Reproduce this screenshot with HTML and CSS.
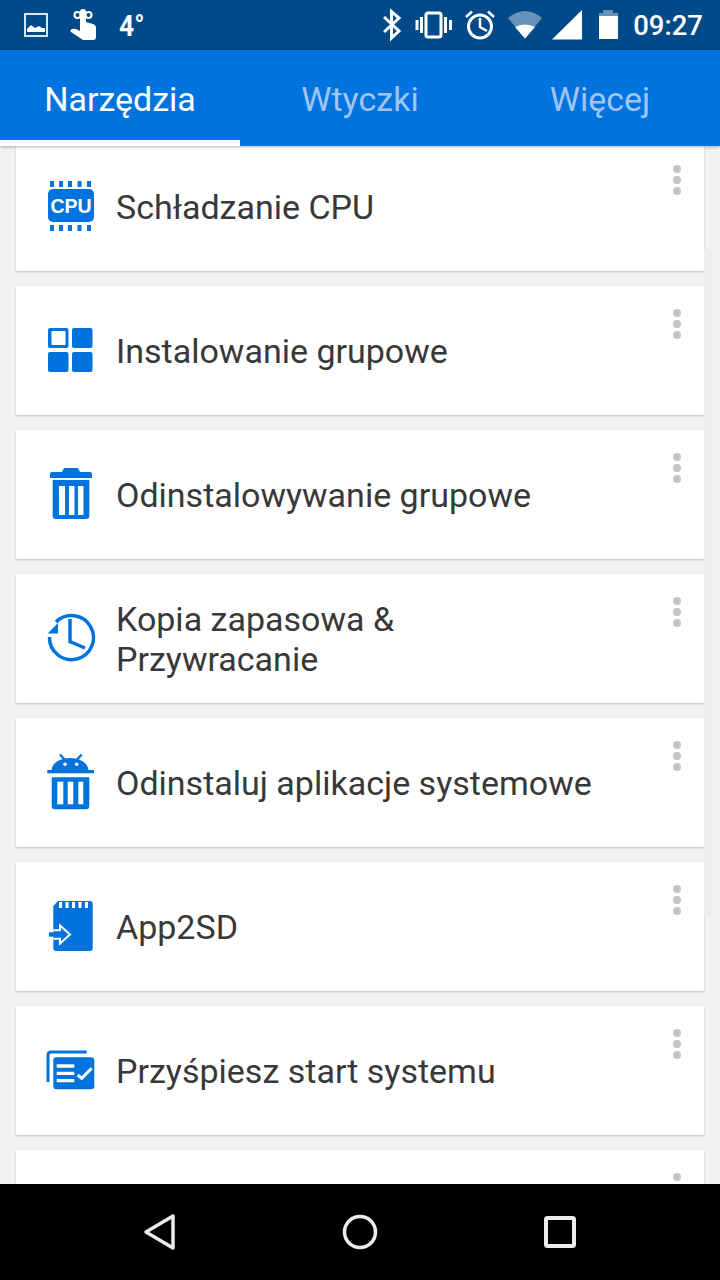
FILE: index.html
```html
<!DOCTYPE html>
<html>
    <head>
        <meta charset="utf-8">
        <title>Narzędzia</title>

        <link rel="stylesheet" href="styles.css">
    </head>

    <body>
        <div class="app">
            <div class="status-bar">
                <svg class="picture-icon" width="24" height="24" viewBox="0 0 24 24">
                    <rect x="1" y="1" width="22" height="22" fill="none" stroke="#d5e6f7" stroke-width="2"/>
                    <path d="M3 19 V16 L7 12 L11 15 L15 13 L18 15 L21 15 V19 Z" fill="#fff"/>
                </svg>
                <svg class="hand-icon" width="28" height="32" viewBox="0 0 28 32">
                    <circle cx="7.500" cy="6" r="3" fill="none" stroke="#fff" stroke-width="2"/>
                    <circle cx="18.500" cy="6" r="3" fill="none" stroke="#fff" stroke-width="2"/>
                    <path d="M10 3 a3 3 0 0 1 6 0 V13 L23 15 Q26 16 26 19 V28 Q26 31 23 31 H13 L1 23 Q-0.500 21 2 20 Q5 19 10 22 Z" fill="#fff"/>
                </svg>
                <span class="temperature">4°</span>
                <svg class="status-icons" width="235" height="50" viewBox="384 0 235 50">
                    <path d="M385 17 L400 31 L392.5 38 V11.5 L400 18 L385 32" fill="none" stroke="#fff" stroke-width="3"/>
                    <rect x="427" y="13" width="15" height="24" rx="2" fill="none" stroke="#fff" stroke-width="3"/>
                    <path d="M418 20 V30 M422.500 17 V33 M446.500 17 V33 M451.500 20 V30" stroke="#fff" stroke-width="3"/>
                    <circle cx="481" cy="26.500" r="11.500" fill="none" stroke="#fff" stroke-width="3"/>
                    <path d="M481 18 V27 L488 31 M467 17 L473 11.500 M489 11.500 L495 17" fill="none" stroke="#fff" stroke-width="2.500"/>
                    <path d="M509 18 Q526 4 543 18 L526 38.500 Z" fill="#fff" opacity="0.4"/>
                    <path d="M516 27 Q526 22 536 27 L526 38.500 Z" fill="#fff"/>
                    <path d="M553 39.500 H583 V10 Z" fill="#fff"/>
                    <path d="M604 13 V10 H614 V13 H619 V16 H600 V13 Z" fill="#fff" opacity="0.4"/>
                    <rect x="600" y="16" width="19" height="23" fill="#fff"/>
                </svg>
                <span class="clock">09:27</span>
            </div>

            <div class="tabs">
                <div class="tab tab-active">Narzędzia</div>
                <div class="tab">Wtyczki</div>
                <div class="tab">Więcej</div>
            </div>

            <div class="list">
                <div class="card">
                    <svg class="card-icon" viewBox="0 0 50 50">
                        <rect x="2" y="8" width="46" height="33" rx="5"/>
                        <path d="M4 0 h4 v6 h-4 z M13 0 h4 v6 h-4 z M22 0 h4 v6 h-4 z M31.500 0 h4 v6 h-4 z M41 0 h4 v6 h-4 z M4 44 h4 v6 h-4 z M13 44 h4 v6 h-4 z M22 44 h4 v6 h-4 z M31.500 44 h4 v6 h-4 z M41 44 h4 v6 h-4 z"/>
                        <text class="cpu-label" x="25" y="31.500">CPU</text>
                    </svg>
                    <div class="card-title">Schładzanie CPU</div>
                    <div class="dots"><i></i><i></i><i></i></div>
                </div>

                <div class="card">
                    <svg class="card-icon" viewBox="0 0 50 50">
                        <rect x="2" y="3" width="20.500" height="20" rx="2"/>
                        <rect x="26" y="3" width="20.500" height="20" rx="2"/>
                        <rect x="2" y="27" width="20.500" height="20" rx="2"/>
                        <rect x="26" y="27" width="20.500" height="20" rx="2"/>
                        <rect class="white" x="5.500" y="6" width="14" height="14" rx="1"/>
                    </svg>
                    <div class="card-title">Instalowanie grupowe</div>
                    <div class="dots"><i></i><i></i><i></i></div>
                </div>

                <div class="card">
                    <svg class="card-icon" viewBox="0 0 50 50">
                        <path d="M4 9 V5 Q4 3 6 3 H16 L18 -1 H32 L34 3 H44 Q46 3 46 5 V9 Z"/>
                        <path d="M6.700 11 H43.300 V47 Q43.300 50 40 50 H10 Q6.700 50 6.700 47 Z"/>
                        <rect class="white" x="13" y="17" width="6" height="29"/>
                        <rect class="white" x="23" y="17" width="5.500" height="29"/>
                        <rect class="white" x="32" y="17" width="5.500" height="29"/>
                    </svg>
                    <div class="card-title">Odinstalowywanie grupowe</div>
                    <div class="dots"><i></i><i></i><i></i></div>
                </div>

                <div class="card">
                    <svg class="card-icon" viewBox="0 0 50 50">
                        <path class="line" d="M3.500 24 A22 22 0 1 0 10 9" stroke-width="3.500"/>
                        <path class="line" d="M24 6 V28.700 L39 35" stroke-width="3.500"/>
                        <path d="M12 10 V20.500 H1.700 Z"/>
                    </svg>
                    <div class="card-title">Kopia zapasowa &amp;<br>Przywracanie</div>
                    <div class="dots"><i></i><i></i><i></i></div>
                </div>

                <div class="card">
                    <svg class="card-icon" viewBox="0 0 50 50">
                        <path d="M5.700 13 A18.300 12 0 0 1 42.300 13 Z"/>
                        <rect x="1.300" y="13" width="46.700" height="3.300"/>
                        <path class="line" d="M14 -2.500 L19 3 M35.700 -2.500 L30.700 3" stroke-width="2.500"/>
                        <circle class="white" cx="19" cy="7.300" r="1.800"/>
                        <circle class="white" cx="30.700" cy="7.300" r="1.800"/>
                        <path d="M5.700 20.300 H43.300 V49 Q43.300 52.300 40 52.300 H9 Q5.700 52.300 5.700 49 Z"/>
                        <rect class="white" x="11.300" y="24.700" width="6" height="22.600"/>
                        <rect class="white" x="21.700" y="24.700" width="5.600" height="22.600"/>
                        <rect class="white" x="32.300" y="24.700" width="5" height="22.600"/>
                    </svg>
                    <div class="card-title">Odinstaluj aplikacje systemowe</div>
                    <div class="dots"><i></i><i></i><i></i></div>
                </div>

                <div class="card">
                    <svg class="card-icon" viewBox="0 0 50 50">
                        <path d="M12 0 H44 Q46.700 0 46.700 3 V47 Q46.700 50 44 50 H10 Q7.300 50 7.300 47 V5 Z"/>
                        <path class="white" d="M13 1 h3 v6 h-3 z M19.500 1 h3 v6 h-3 z M26 1 h3 v6 h-3 z M32.500 1 h3 v6 h-3 z M39 1 h3 v6 h-3 z"/>
                        <rect class="white" x="0" y="28" width="7.300" height="11"/>
                        <path d="M3 31.300 H15 V35.700 H3 Z"/>
                        <path d="M7.300 29.300 H14 V24.500 L24 33.500 L14 42.500 V37.700 H7.300" fill="none" stroke="#fff" stroke-width="2"/>
                    </svg>
                    <div class="card-title">App2SD</div>
                    <div class="dots"><i></i><i></i><i></i></div>
                </div>

                <div class="card">
                    <svg class="card-icon" viewBox="0 0 50 50">
                        <path class="line" d="M40.700 7 H5 Q2 7 2 10 V37" stroke-width="3"/>
                        <rect x="7.300" y="12.300" width="41" height="32" rx="3"/>
                        <path class="white" d="M10.700 19.300 H28.300 V22.700 H10.700 Z M10.700 26.700 H28.300 V30 H10.700 Z M10.700 34 H28.300 V37.300 H10.700 Z"/>
                        <path d="M31.700 30 L35.700 33.300 L45.700 23.300" fill="none" stroke="#fff" stroke-width="3"/>
                    </svg>
                    <div class="card-title">Przyśpiesz start systemu</div>
                    <div class="dots"><i></i><i></i><i></i></div>
                </div>

                <div class="card">
                    <div class="dots"><i></i><i></i><i></i></div>
                </div>

                <div class="scroll-thumb"></div>
            </div>

            <div class="nav-bar">
                <svg class="nav-icon" viewBox="0 0 40 40">
                    <path d="M6 20 L33 4 V36 Z" fill="none" stroke="#ececec" stroke-width="3.500" stroke-linejoin="round"/>
                </svg>
                <svg class="nav-icon" viewBox="0 0 40 40">
                    <circle cx="20" cy="20" r="15.500" fill="none" stroke="#ececec" stroke-width="3.500"/>
                </svg>
                <svg class="nav-icon" viewBox="0 0 40 40">
                    <rect x="6" y="6" width="28" height="28" rx="1.500" fill="none" stroke="#ececec" stroke-width="4"/>
                </svg>
            </div>
        </div>
    </body>
</html>
```

FILE: styles.css
```css
body{
    margin:0;
    font-family:Roboto, sans-serif;
}

.app{
    width:720px;
    height:1280px;
    display:flex;
    flex-direction:column;
    background-color:rgb(241, 241, 241);
    overflow:hidden;
}

.status-bar{
    height:50px;
    flex-shrink:0;
    display:flex;
    align-items:center;
    padding-left:24px;
    padding-right:17px;
    background-color:rgb(1, 74, 138);
    color:white;
}
.status-bar svg{
    flex-shrink:0;
}
.hand-icon{
    margin-left:22px;
}
.temperature{
    margin-left:21px;
    width:30px;
    font-size:30px;
    font-weight:bold;
    transform:scaleX(0.88);
    transform-origin:left center;
}
.status-icons{
    margin-left:auto;
}
.clock{
    margin-left:15px;
    font-size:27.5px;
    font-weight:500;
}

.tabs{
    height:96px;
    flex-shrink:0;
    display:flex;
    background-color:rgb(0, 116, 222);
    box-shadow:0 1px 3px rgba(0, 0, 0, 0.3);
    position:relative;
    z-index:1;
}
.tab{
    width:240px;
    height:96px;
    box-sizing:border-box;
    padding-top:2px;
    display:flex;
    align-items:center;
    justify-content:center;
    font-size:34px;
    color:rgb(160, 196, 244);
}
.tab-active{
    color:white;
    border-bottom:6px solid white;
    padding-top:8px;
}

.list{
    flex:1;
    min-height:0;
    position:relative;
    overflow:hidden;
    padding:0 16px;
    display:flex;
    flex-direction:column;
    gap:15px;
}
.card{
    height:129px;
    flex-shrink:0;
    display:flex;
    align-items:center;
    position:relative;
    padding-left:30px;
    background-color:white;
    box-shadow:0 1px 2px rgba(0, 0, 0, 0.2);
}
.card:first-child{
    margin-top:-4px;
}
.card-icon{
    width:50px;
    height:50px;
    flex-shrink:0;
    margin-right:20px;
    margin-bottom:1px;
    overflow:visible;
    fill:rgb(0, 115, 220);
}
.card-icon .white{
    fill:white;
}
.card-icon .line{
    fill:none;
    stroke:rgb(0, 115, 220);
}
.cpu-label{
    fill:white;
    font-family:"Liberation Sans", sans-serif;
    font-size:19.5px;
    font-weight:bold;
    text-anchor:middle;
}
.card-title{
    padding-top:1px;
    font-size:34px;
    line-height:40px;
    color:rgb(56, 56, 56);
}
.dots{
    position:absolute;
    top:23px;
    right:23px;
    display:flex;
    flex-direction:column;
    gap:3px;
}
.dots i{
    width:8px;
    height:8px;
    border-radius:50%;
    background-color:rgb(196, 196, 196);
}
.scroll-thumb{
    position:absolute;
    top:104px;
    right:8px;
    width:8px;
    height:665px;
    background-color:rgb(236, 236, 236);
}

.nav-bar{
    height:96px;
    flex-shrink:0;
    display:flex;
    align-items:center;
    justify-content:center;
    gap:160px;
    background-color:black;
    position:relative;
}
.nav-icon{
    width:40px;
    height:40px;
}
```
